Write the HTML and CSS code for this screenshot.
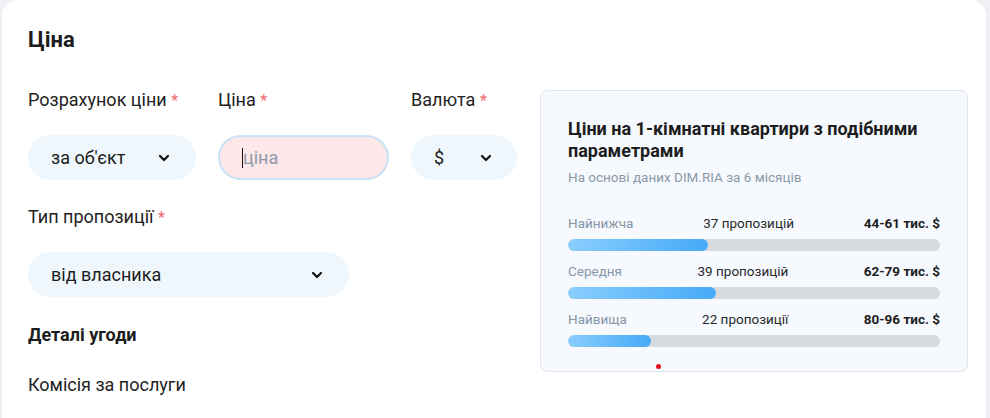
FILE: index.html
```html
<!DOCTYPE html>
<html lang="uk">
  <head>
    <meta charset="utf-8" />
    <title>Ціна</title>
    <link rel="stylesheet" href="styles.css">
  </head>
  <body>
    <div class="card">
      <h2 class="card-title">Ціна</h2>
      <div class="price-layout">
        <div class="form-col">
          <div class="field-row">
            <div class="field field-calc">
              <label class="field-label">Розрахунок ціни <span class="req">*</span></label>
              <div class="select">
                <span>за об'єкт</span>
                <svg class="chevron" width="12" height="8" viewBox="0 0 12 8"><path d="M2 2l4 4 4-4" /></svg>
              </div>
            </div>
            <div class="field field-price">
              <label class="field-label">Ціна <span class="req">*</span></label>
              <div class="input input-error">
                <span class="caret"></span><span class="placeholder">ціна</span>
              </div>
            </div>
            <div class="field field-currency">
              <label class="field-label">Валюта <span class="req">*</span></label>
              <div class="select">
                <span>$</span>
                <svg class="chevron" width="12" height="8" viewBox="0 0 12 8"><path d="M2 2l4 4 4-4" /></svg>
              </div>
            </div>
          </div>

          <div class="field field-type">
            <label class="field-label">Тип пропозиції <span class="req">*</span></label>
            <div class="select">
              <span>від власника</span>
              <svg class="chevron" width="12" height="8" viewBox="0 0 12 8"><path d="M2 2l4 4 4-4" /></svg>
            </div>
          </div>

          <h3 class="sub-title">Деталі угоди</h3>
          <div class="plain-label">Комісія за послуги</div>
        </div>

        <div class="stats">
          <div class="stats-title">Ціни на 1-кімнатні квартири з подібними параметрами</div>
          <div class="stats-note">На основі даних DIM.RIA за 6 місяців</div>

          <div class="stat-row">
            <div class="stat-head">
              <span class="stat-name">Найнижча</span>
              <span class="stat-count">37 пропозицій</span>
              <span class="stat-value">44-61 тис. $</span>
            </div>
            <div class="bar"><div class="bar-fill" style="width: 140px"></div></div>
          </div>
          <div class="stat-row">
            <div class="stat-head">
              <span class="stat-name">Середня</span>
              <span class="stat-count">39 пропозицій</span>
              <span class="stat-value">62-79 тис. $</span>
            </div>
            <div class="bar"><div class="bar-fill" style="width: 148px"></div></div>
          </div>
          <div class="stat-row">
            <div class="stat-head">
              <span class="stat-name">Найвища</span>
              <span class="stat-count">22 пропозиції</span>
              <span class="stat-value">80-96 тис. $</span>
            </div>
            <div class="bar"><div class="bar-fill" style="width: 83px"></div></div>
          </div>

          <span class="dot"></span>
        </div>
      </div>
    </div>
  </body>
</html>
```

FILE: styles.css
```css
* {
  box-sizing: border-box;
}

body {
  margin: 0;
  background: #eef0f3;
  font-family: Roboto, "Liberation Sans", Arial, sans-serif;
  color: #1d1d1d;
  overflow: hidden;
}

.card {
  margin-left: 2px;
  width: 984px;
  height: 418px;
  background: #fff;
  border-radius: 16px 16px 0 0;
  padding: 27px 18px 0 26px;
}

.card-title {
  margin: 0 0 36px;
  font-size: 22px;
  line-height: 26px;
  font-weight: 700;
}

.price-layout {
  display: flex;
  align-items: flex-start;
}

.form-col {
  width: 512px;
  flex-shrink: 0;
}

.field-row {
  display: flex;
  gap: 22px;
  margin-bottom: 26px;
}

.field-label {
  display: block;
  font-size: 18px;
  line-height: 22px;
  color: #222;
  margin-bottom: 23px;
}

.req {
  color: #ef6b6b;
  font-size: 16px;
}

.select {
  display: flex;
  align-items: center;
  justify-content: space-between;
  height: 45px;
  border-radius: 23px;
  background: #eff7fc;
  padding: 0 26px 0 23px;
  font-size: 18px;
  color: #1d1d1d;
}

.chevron path {
  fill: none;
  stroke: #111;
  stroke-width: 2.2;
  stroke-linecap: round;
  stroke-linejoin: round;
}

.field-calc {
  width: 168px;
}

.field-price {
  width: 171px;
}

.field-currency {
  width: 106px;
}

.field-currency .select {
  padding-right: 25px;
}

.input {
  display: flex;
  align-items: center;
  height: 45px;
  border-radius: 23px;
  padding-left: 22px;
  font-size: 18px;
}

.input-error {
  background: #fde7e8;
  border: 2px solid #c9e2f6;
}

.caret {
  width: 1px;
  height: 20px;
  background: #111;
}

.placeholder {
  color: #8d9cab;
}

.field-type {
  width: 321px;
}

.sub-title {
  margin: 27px 0 0;
  font-size: 18px;
  line-height: 22px;
  font-weight: 700;
}

.plain-label {
  margin-top: 28px;
  font-size: 18px;
  line-height: 22px;
  color: #222;
}

.stats {
  position: relative;
  width: 428px;
  flex-shrink: 0;
  margin-top: 1px;
  background: #f6f9fe;
  border: 1px solid #dfe4ea;
  border-radius: 8px;
  padding: 27px 27px 24px 27px;
}

.stats-title {
  font-size: 18px;
  line-height: 22px;
  font-weight: 700;
  color: #1d1d1d;
}

.stats-note {
  margin-top: 7px;
  font-size: 13.5px;
  line-height: 17px;
  color: #8b9aa9;
  margin-bottom: 28px;
}

.stat-row + .stat-row {
  margin-top: 11px;
}

.stat-head {
  display: flex;
  justify-content: space-between;
  font-size: 13.5px;
  line-height: 18px;
  margin-bottom: 7px;
}

.stat-name {
  color: #8796a5;
}

.stat-count {
  color: #2a2a2a;
}

.stat-value {
  font-weight: 700;
  color: #1d1d1d;
}

.bar {
  height: 12px;
  border-radius: 6px;
  background: #d8dbde;
  overflow: hidden;
}

.bar-fill {
  height: 100%;
  border-radius: 6px;
  background: linear-gradient(90deg, #8acdfe, #45aaf6);
}

.dot {
  position: absolute;
  left: 115px;
  bottom: 2px;
  width: 5px;
  height: 5px;
  border-radius: 50%;
  background: #e4131a;
}
```
